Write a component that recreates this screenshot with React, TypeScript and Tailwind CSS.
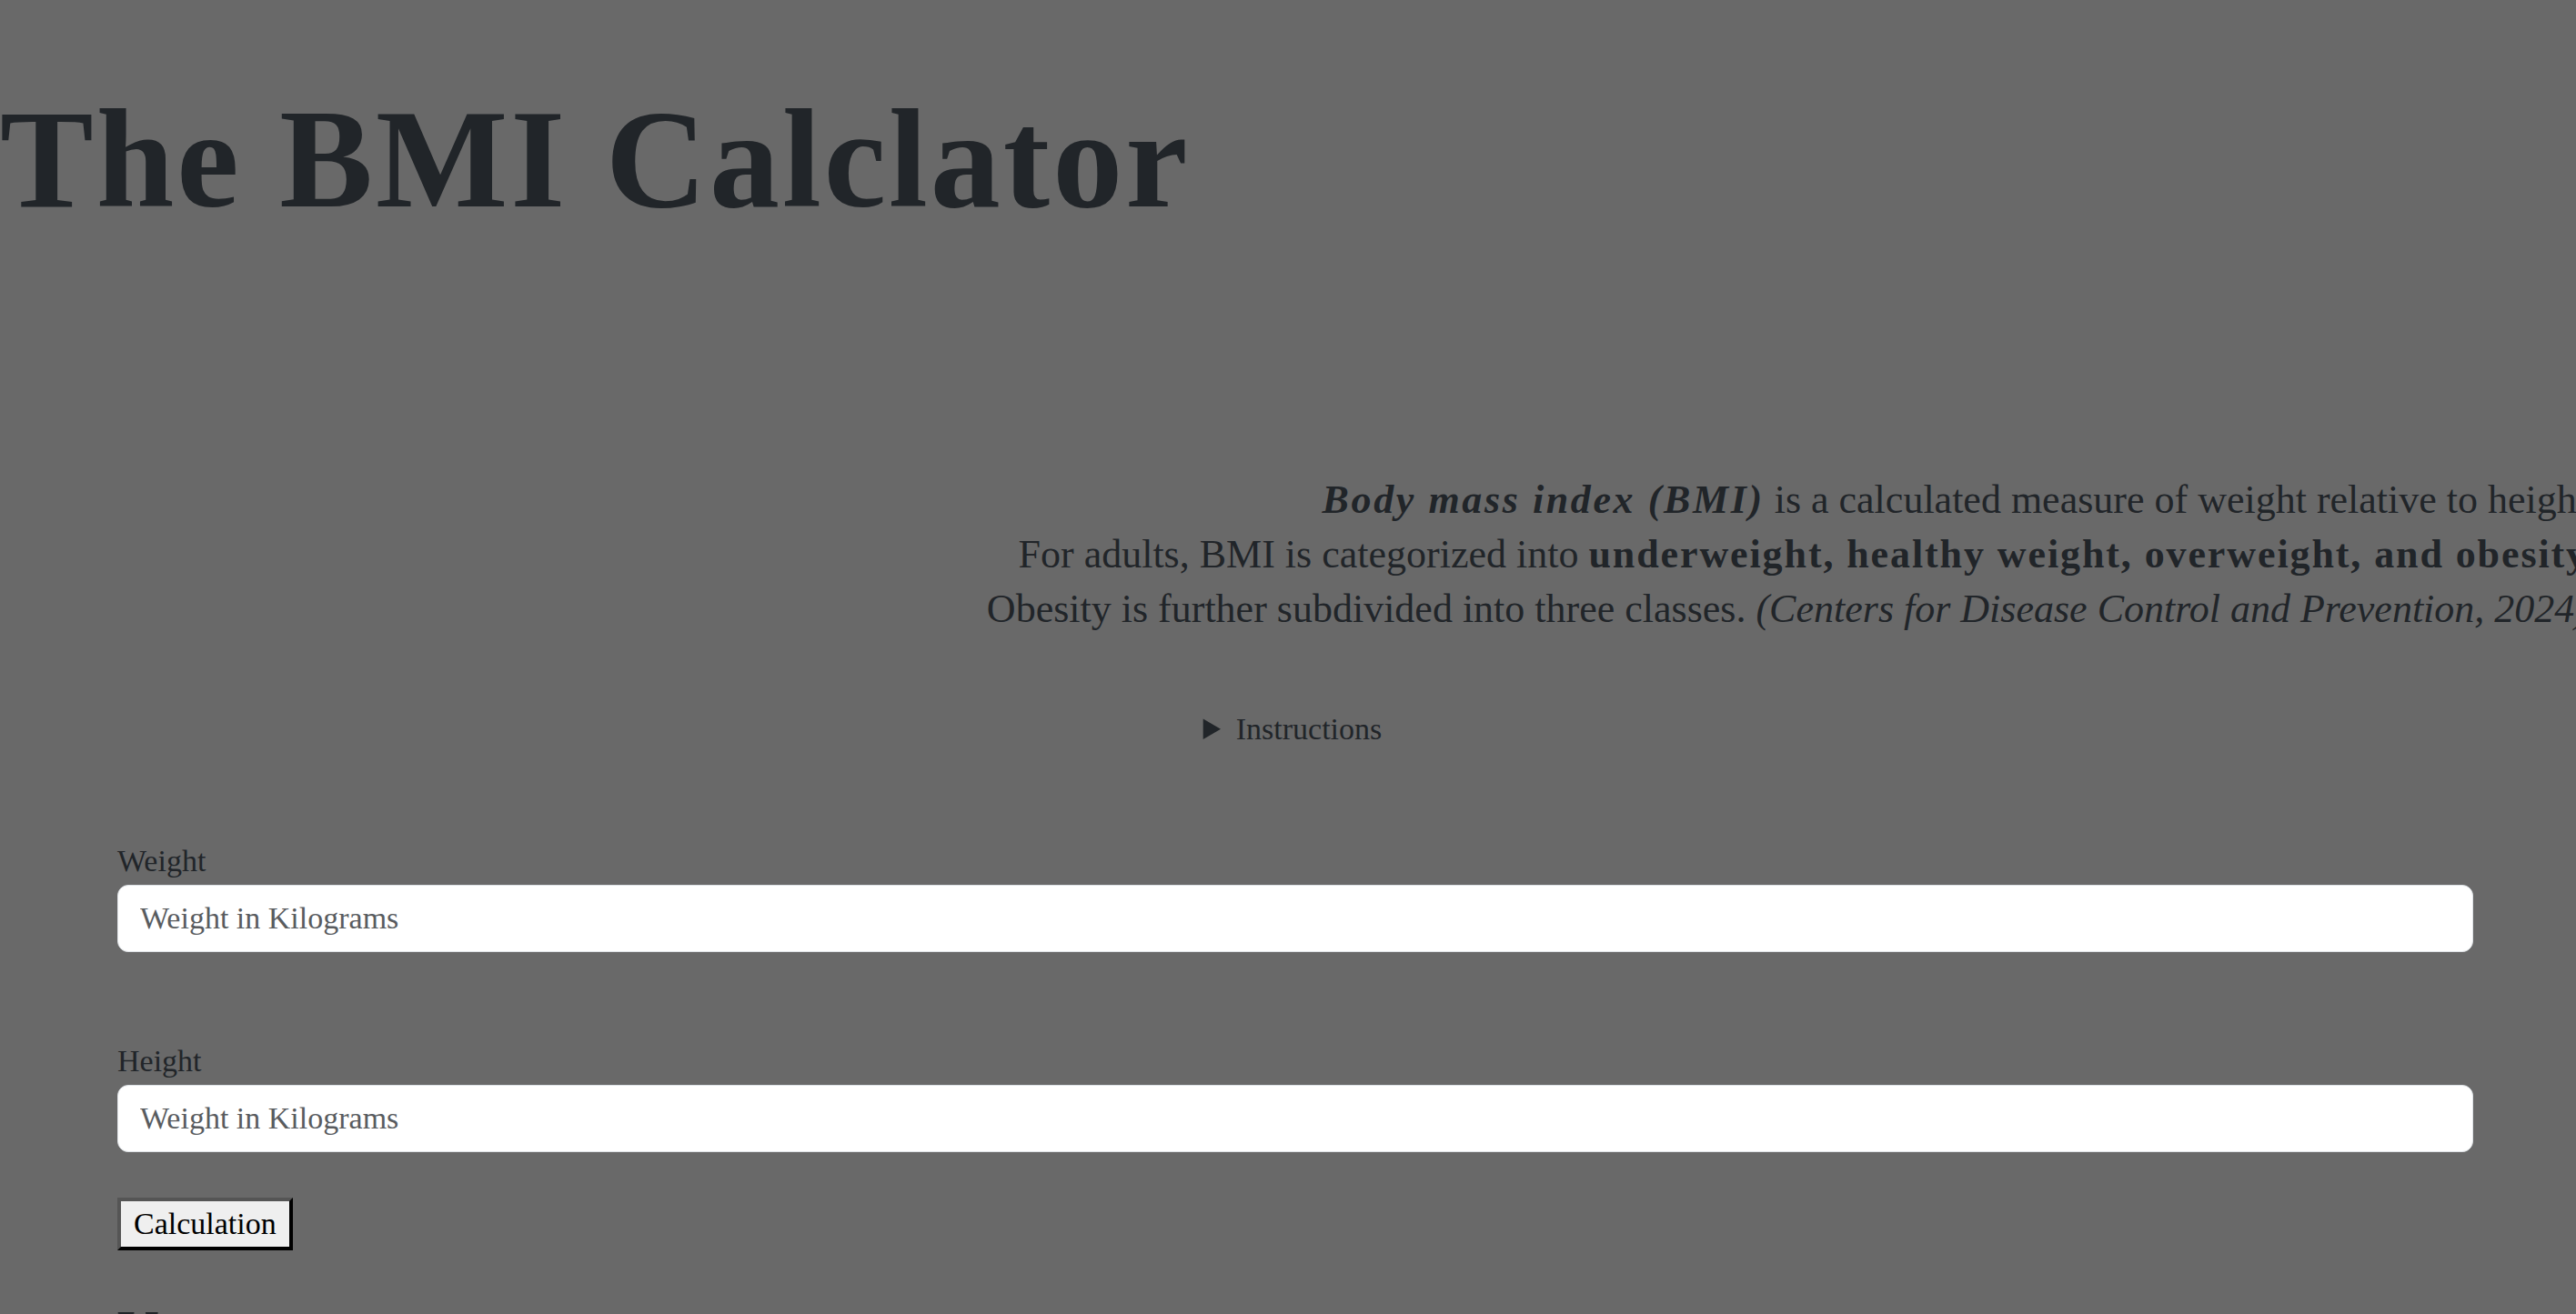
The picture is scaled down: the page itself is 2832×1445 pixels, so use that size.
import { useState } from "react";

export default function App() {
  const [weight, setWeight] = useState("");
  const [height, setHeight] = useState("");

  return (
    <div className="min-h-screen overflow-hidden bg-[#696969] font-['Liberation_Serif','DejaVu_Serif',serif] text-[#212529]">
      <h1 className="m-0 pt-[85px] text-[154px] font-bold leading-[180px] tracking-[3px]">The BMI Calclator</h1>

      <div className="mt-[255px] flex justify-end">
        <p className="mr-[-24px] shrink-0 text-right text-[44px] leading-[60px]">
          <strong className="italic tracking-[2.6px]">Body mass index (BMI)</strong> is a calculated measure of weight relative to height.
          <br />
          For adults, BMI is categorized into{" "}
          <strong className="tracking-[1.9px]">underweight, healthy weight, overweight, and obesity</strong>.
          <br />
          Obesity is further subdivided into three classes.{" "}
          <em>(Centers for Disease Control and Prevention, 2024)</em>.
        </p>
      </div>

      <details className="mt-[78px] text-center text-[34px] leading-[48px]">
        <summary className="cursor-pointer pl-[10px]">Instructions</summary>
      </details>

      <form className="mt-[97px] pl-[129px] pr-[113px]" onSubmit={(e) => e.preventDefault()}>
        <label htmlFor="weight" className="block text-[34px] leading-[48px]">
          Weight
        </label>
        <input
          id="weight"
          value={weight}
          onChange={(e) => setWeight(e.target.value)}
          placeholder="Weight in Kilograms"
          className="mt-[2px] block h-[74px] w-full rounded-[12px] border border-[#dee2e6] bg-white px-[24px] text-[34px] text-[#212529] outline-none placeholder:text-[#595c5f]"
        />

        <label htmlFor="height" className="mt-[96px] block text-[34px] leading-[48px]">
          Height
        </label>
        <input
          id="height"
          value={height}
          onChange={(e) => setHeight(e.target.value)}
          placeholder="Weight in Kilograms"
          className="mt-[2px] block h-[74px] w-full rounded-[12px] border border-[#dee2e6] bg-white px-[24px] text-[34px] text-[#212529] outline-none placeholder:text-[#595c5f]"
        />

        <button
          type="submit"
          className="mt-[50px] block h-[58px] border-[4px] border-t-[#555555] border-l-[#555555] border-r-black border-b-black bg-[#efefef] px-[14px] text-[34px] leading-[40px] text-black"
        >
          Calculation
        </button>

        <h2 className="mt-[50px] text-[64px] font-medium leading-[77px]">Your score</h2>
      </form>
    </div>
  );
}
